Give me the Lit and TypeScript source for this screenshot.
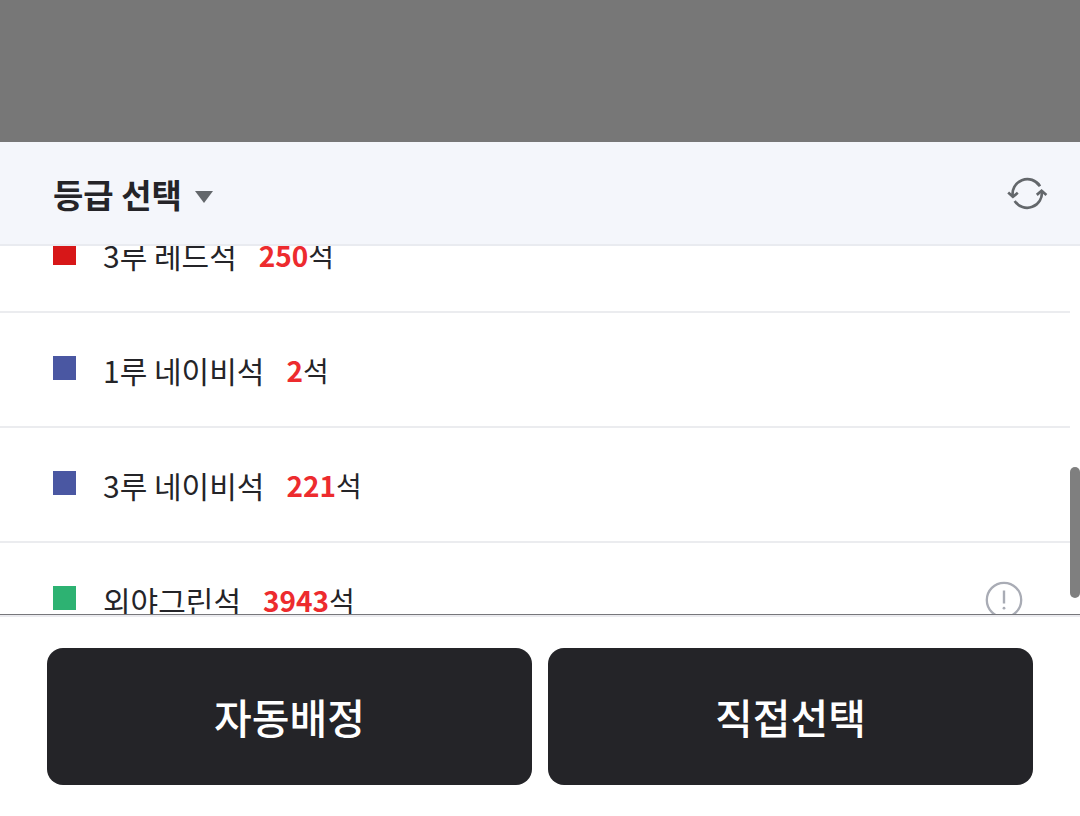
import { LitElement, html, css, nothing } from "lit";
import { customElement, query } from "lit/decorators.js";
import { styleMap } from "lit/directives/style-map.js";

interface Grade {
  name: string;
  seats: number;
  color: string;
  info?: boolean;
}

const GRADES: Grade[] = [
  { name: "3루 레드석", seats: 250, color: "#d71718" },
  { name: "1루 네이비석", seats: 2, color: "#4a57a2" },
  { name: "3루 네이비석", seats: 221, color: "#4a57a2" },
  { name: "외야그린석", seats: 3943, color: "#2db272", info: true },
];

@customElement("grade-row")
class GradeRow extends LitElement {
  static properties = { grade: { attribute: false } };
  declare grade: Grade;

  static styles = css`
    :host {
      display: flex;
      align-items: center;
      box-sizing: border-box;
      height: 115px;
      padding: 0 47px 0 53px;
      border-bottom: 2px solid #ebecef;
    }
    .swatch {
      width: 23px;
      height: 24px;
      margin: 0 27px 4px 0;
    }
    .name {
      font-size: 30px;
      line-height: 44px;
      margin-right: 22px;
    }
    .seats {
      flex: 1;
      font-size: 28px;
      line-height: 44px;
    }
    .count {
      color: #ed2b2e;
      font-weight: 700;
    }
    .info {
      display: block;
      padding: 0;
      border: 0;
      background: none;
      cursor: pointer;
    }
    .info svg {
      display: block;
    }
  `;

  render() {
    const g = this.grade;
    return html`
      <span class="swatch" style=${styleMap({ background: g.color })}></span>
      <span class="name">${g.name}</span>
      <span class="seats"><strong class="count">${g.seats}</strong>석</span>
      ${g.info
        ? html`<button class="info" type="button" aria-label="${g.name} 안내">
            <svg width="38" height="38" viewBox="0 0 38 38" fill="none" stroke="#a9acb5">
              <circle cx="19" cy="19" r="17.2" stroke-width="2.3" />
              <path d="M19 9.5V22.5" stroke-width="2.4" />
              <circle cx="19" cy="27.2" r="1.4" fill="#a9acb5" stroke="none" />
            </svg>
          </button>`
        : nothing}
    `;
  }
}

@customElement("app-root")
class AppRoot extends LitElement {
  @query(".list") list!: HTMLElement;

  static styles = css`
    :host {
      display: flex;
      flex-direction: column;
      height: 100vh;
      background: #777777;
      color: #242428;
      font-family: "Noto Sans CJK KR", "Noto Sans", sans-serif;
    }
    .sheet {
      flex: 1;
      min-height: 0;
      margin-top: 142px;
      display: flex;
      flex-direction: column;
      background: #ffffff;
    }
    .head {
      display: flex;
      align-items: center;
      justify-content: space-between;
      box-sizing: border-box;
      height: 104px;
      padding: 2px 32px 0 53px;
      background: #f4f6fb;
      border-bottom: 2px solid #e9ebf0;
    }
    .title {
      margin: 0;
      font-size: 33px;
    }
    .toggle,
    .refresh {
      display: flex;
      align-items: center;
      padding: 0;
      border: 0;
      background: none;
      color: inherit;
      font: inherit;
      cursor: pointer;
    }
    .toggle {
      gap: 13px;
      font-weight: 700;
      line-height: 48px;
    }
    .caret {
      margin-top: 5px;
    }
    .body {
      flex: 1;
      min-height: 0;
      display: flex;
    }
    .list {
      flex: 1;
      margin: 0;
      padding: 0;
      overflow-y: auto;
      scrollbar-width: none;
      list-style: none;
    }
    .track {
      display: grid;
      grid-template-rows: 221fr 131fr 16fr;
      width: 10px;
    }
    .thumb {
      grid-row: 2;
      border-radius: 5px;
      background: #7f7f7f;
    }
    .foot {
      display: grid;
      grid-template-columns: 1fr 1fr;
      gap: 16px;
      padding: 33px 47px 31px;
      border-top: 1px solid #77777b;
      box-shadow: inset 0 2px #ebebef;
    }
    .action {
      height: 137px;
      padding: 0 0 2px;
      border: 0;
      border-radius: 16px;
      background: #242428;
      color: #ffffff;
      font-family: inherit;
      font-size: 41px;
      font-weight: 500;
      cursor: pointer;
    }
  `;

  async firstUpdated() {
    await Promise.all(
      [...this.renderRoot.querySelectorAll("grade-row")].map((r) => (r as LitElement).updateComplete)
    );
    this.list.scrollTop = 48;
  }

  render() {
    return html`
      <section class="sheet">
        <header class="head">
          <h2 class="title">
            <button class="toggle" type="button">
              등급 선택
              <svg class="caret" width="18" height="12" viewBox="0 0 18 12">
                <path d="M0 0H18L9 12Z" fill="#63676b" />
              </svg>
            </button>
          </h2>
          <button class="refresh" type="button" aria-label="새로고침">
            <svg width="42" height="34" viewBox="0 0 42 34" fill="none" stroke="#63676b"
              stroke-width="2.7">
              <path d="M34 9.2A14.8 14.8 0 0 0 6.9 20" />
              <path d="M2.2 15.6L6.9 19.8L11.8 15.8" />
              <path d="M8.7 24A14.8 14.8 0 0 0 35.8 14" />
              <path d="M30.8 17.9L35.6 13.8L40.4 18" />
            </svg>
          </button>
        </header>
        <div class="body">
          <ul class="list">
            ${GRADES.map((g) => html`<li><grade-row .grade=${g}></grade-row></li>`)}
          </ul>
          <div class="track"><div class="thumb"></div></div>
        </div>
        <footer class="foot">
          <button class="action" type="button">자동배정</button>
          <button class="action" type="button">직접선택</button>
        </footer>
      </section>
    `;
  }
}
